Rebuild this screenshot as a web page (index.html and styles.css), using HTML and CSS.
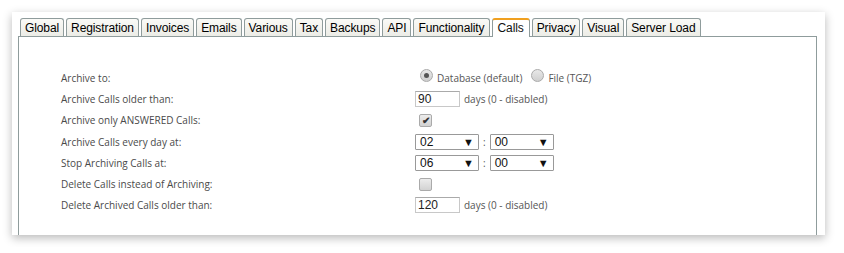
FILE: index.html
```html
<!DOCTYPE html>
<html lang="en">
  <head>
    <meta charset="UTF-8" />
    <title>Settings - Calls</title>
    <link rel="stylesheet" href="styles.css">
  </head>
  <body>
    <div class="card">
      <ul class="tabs">
        <li>Global</li>
        <li>Registration</li>
        <li>Invoices</li>
        <li>Emails</li>
        <li>Various</li>
        <li>Tax</li>
        <li>Backups</li>
        <li>API</li>
        <li>Functionality</li>
        <li class="active">Calls</li>
        <li>Privacy</li>
        <li>Visual</li>
        <li>Server Load</li>
      </ul>
      <div class="panel">
        <div class="form">
          <div class="label">Archive to:</div>
          <div class="field">
            <span class="radio checked"></span><span class="note">Database (default)</span>
            <span class="radio"></span><span class="note">File (TGZ)</span>
          </div>

          <div class="label">Archive Calls older than:</div>
          <div class="field">
            <span class="text-input">90</span><span class="note">days (0 - disabled)</span>
          </div>

          <div class="label">Archive only ANSWERED Calls:</div>
          <div class="field">
            <span class="checkbox checked">&#10004;</span>
          </div>

          <div class="label">Archive Calls every day at:</div>
          <div class="field">
            <span class="select">02<b>&#9660;</b></span><span class="colon">:</span><span class="select">00<b>&#9660;</b></span>
          </div>

          <div class="label">Stop Archiving Calls at:</div>
          <div class="field">
            <span class="select">06<b>&#9660;</b></span><span class="colon">:</span><span class="select">00<b>&#9660;</b></span>
          </div>

          <div class="label">Delete Calls instead of Archiving:</div>
          <div class="field">
            <span class="checkbox"></span>
          </div>

          <div class="label">Delete Archived Calls older than:</div>
          <div class="field">
            <span class="text-input">120</span><span class="note">days (0 - disabled)</span>
          </div>
        </div>
      </div>
    </div>
  </body>
</html>
```

FILE: styles.css
```css
body {
  margin: 0;
  padding: 12px;
  background-color: #fff;
  font-family: "Open Sans", sans-serif;
}
.card {
  width: 813px;
  height: 223px;
  background-color: #fff;
  box-shadow: 0 3px 9px rgba(0, 0, 0, 0.28);
  padding: 6px 0 0 6px;
  box-sizing: border-box;
  overflow: hidden;
}
.tabs {
  list-style: none;
  margin: 0;
  padding: 0 0 0 2px;
  display: flex;
  gap: 2px;
  position: relative;
  z-index: 1;
}
.tabs li {
  font-family: "Liberation Sans", Arial, sans-serif;
  font-size: 12px;
  letter-spacing: -0.1px;
  color: #000;
  height: 17px;
  line-height: 18px;
  padding: 0 4px;
  border: 1px solid #8f9c9c;
  border-bottom: none;
  border-radius: 3px 3px 0 0;
  background: linear-gradient(#fafaf7, #ecece6);
}
.tabs li.active {
  background: #fff;
  border-top: 2px solid #f0a020;
  height: 17px;
  line-height: 17px;
  margin-bottom: -1px;
  padding: 0 5px;
  color: #111;
}
.panel {
  width: 799px;
  height: 220px;
  border: 1px solid #8f9c9c;
  box-sizing: border-box;
  padding: 30px 0 0 42px;
}
.form {
  display: grid;
  grid-template-columns: 354px auto;
  grid-auto-rows: 21.3px;
  align-items: center;
}
.label {
  font-size: 10px;
  color: #4a4a4a;
}
.field {
  display: flex;
  align-items: center;
  font-size: 10px;
  color: #555;
}
.note {
  margin: 0 4px 0 4px;
}
.radio {
  width: 11px;
  height: 11px;
  border-radius: 50%;
  border: 1px solid #aaa;
  background: linear-gradient(#e8e8e8, #cfcfcf);
  margin-left: 5px;
  margin-top: -4px;
  position: relative;
}
.radio.checked::after {
  content: "";
  position: absolute;
  left: 3px;
  top: 3px;
  width: 5px;
  height: 5px;
  border-radius: 50%;
  background: #555;
}
.text-input {
  width: 41px;
  height: 14px;
  border: 1px solid #c8c8c8;
  border-top-color: #aaa;
  line-height: 14px;
  padding-left: 2px;
  font-family: "Liberation Sans", Arial, sans-serif;
  font-size: 12px;
  color: #222;
}
.checkbox {
  width: 11px;
  height: 11px;
  border: 1px solid #aaa;
  border-radius: 2px;
  background: linear-gradient(#ececec, #d2d2d2);
  margin-left: 4px;
  font-size: 10px;
  font-weight: bold;
  line-height: 11px;
  text-align: center;
  color: #333;
}
.select {
  width: 54px;
  height: 14px;
  border: 1px solid #999;
  border-radius: 1px;
  padding: 0 4px;
  display: flex;
  justify-content: space-between;
  align-items: center;
  font-family: "Liberation Sans", Arial, sans-serif;
  font-size: 12px;
  color: #111;
}
.select b {
  font-size: 11px;
  font-weight: normal;
}
.colon {
  margin: 0 4px;
  color: #555;
}
```
